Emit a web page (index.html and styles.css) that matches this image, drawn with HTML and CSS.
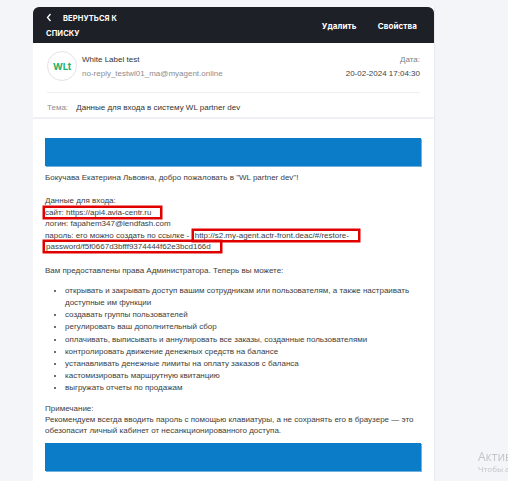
FILE: index.html
```html
<!DOCTYPE html>
<html lang="ru">
<head>
<meta charset="utf-8">
<link rel="stylesheet" href="styles.css">
</head>
<body>
<div class="panel">
  <div class="topbar">
    <a class="back">
      <svg class="chev" width="6" height="9" viewBox="0 0 6 9"><polyline points="4.5,1 1.5,4.5 4.5,8" fill="none" stroke="#fff" stroke-width="1.3"/></svg>ВЕРНУТЬСЯ К СПИСКУ
    </a>
    <div class="actions">
      <span>Удалить</span>
      <span>Свойства</span>
    </div>
  </div>
  <div class="sender-wrap">
    <div class="sender">
      <div class="avatar">WLt</div>
      <div class="from">
        <div class="name">White Label test</div>
        <div class="email">no-reply_testwl01_ma@myagent.online</div>
      </div>
      <div class="date">
        <div>Дата:</div>
        <div>20-02-2024 17:04:30</div>
      </div>
    </div>
  </div>
  <div class="subject">
    <span class="label">Тема:</span>
    <span class="subj-text">Данные для входа в систему WL partner dev</span>
  </div>
  <div class="mail">
    <div class="band"></div>
    <p class="greet">Бокучава Екатерина Львовна, добро пожаловать в "WL partner dev"!</p>
    <p class="creds">Данные для входа:<br>
      <span class="hl hl-site">сайт: https://api4.avia-centr.ru</span><br>
      логин: fapahem347@lendfash.com<br>
      пароль: его можно создать по ссылке -&nbsp;&nbsp;<span class="hl hl-link">http://s2.my-agent.actr-front.deac/#/restore-password/f5f0667d3bfff9374444f62e3bcd166d</span>
    </p>
    <p class="rights">Вам предоставлены права Администратора. Теперь вы можете:</p>
    <ul class="list">
      <li>открывать и закрывать доступ вашим сотрудникам или пользователям, а также настраивать доступные им функции</li>
      <li>создавать группы пользователей</li>
      <li>регулировать ваш дополнительный сбор</li>
      <li>оплачивать, выписывать и аннулировать все заказы, созданные пользователями</li>
      <li>контролировать движение денежных средств на балансе</li>
      <li>устанавливать денежные лимиты на оплату заказов с баланса</li>
      <li>кастомизировать маршрутную квитанцию</li>
      <li>выгружать отчеты по продажам</li>
    </ul>
    <p class="note">Примечание:<br>Рекомендуем всегда вводить пароль с помощью клавиатуры, а не сохранять его в браузере — это обезопасит личный кабинет от несанкционированного доступа.</p>
    <div class="band"></div>
  </div>
</div>
<div class="watermark">
  <div class="wm-big">Актив</div>
  <div class="wm-small">Чтобы а</div>
</div>
</body>
</html>
```

FILE: styles.css
```css
html, body {
  margin: 0;
  padding: 0;
}
body {
  background: #f4f5f8;
  height: 481px;
  overflow: hidden;
  font-family: "Liberation Sans", Arial, sans-serif;
}
.panel {
  margin: 7px 0 0 33px;
  width: 401px;
  min-height: 474px;
  background: #fff;
  border-right: 1px solid #e8e8ee;
}
.topbar {
  height: 36px;
  background: #1e2027;
  border-radius: 6px 6px 0 0;
  display: flex;
  align-items: center;
  justify-content: space-between;
  padding: 1px 17px 0 13px;
  box-sizing: border-box;
  font-family: Inter, "Noto Sans", sans-serif;
  font-weight: 700;
  color: #fff;
}
.back {
  width: 80px;
  font-size: 7.5px;
  line-height: 15px;
  letter-spacing: 0.1px;
}
.chev {
  vertical-align: -1px;
  margin-right: 11px;
}
.actions {
  display: flex;
  gap: 21px;
  font-size: 8px;
  letter-spacing: 0.1px;
}
.sender-wrap {
  padding: 0 14px;
}
.sender {
  display: flex;
  align-items: center;
  padding: 8px 0 11px;
  border-bottom: 1px solid #efeff3;
}
.avatar {
  width: 28px;
  height: 28px;
  border: 1px solid #e2e2ea;
  border-radius: 50%;
  display: flex;
  align-items: center;
  justify-content: center;
  font-family: Inter, "Noto Sans", sans-serif;
  font-weight: 700;
  font-size: 9.5px;
  color: #22b26b;
  letter-spacing: -0.2px;
}
.from {
  margin-left: 5px;
  flex: 1;
  font-size: 8px;
  line-height: 14px;
  padding-top: 2px;
}
.name {
  color: #333;
}
.email {
  color: #8c8c92;
}
.date {
  text-align: right;
  font-size: 8px;
  line-height: 14px;
  padding-top: 2px;
  color: #7f7f85;
}
.date div:last-child {
  color: #444;
}
.subject {
  padding: 9px 14px 3px;
  font-size: 8px;
  line-height: 12px;
  border-bottom: 2px solid #f0f0f4;
}
.label {
  color: #8c8c92;
  margin-right: 6px;
}
.subj-text {
  color: #333;
}
.mail {
  padding: 19px 13px 12px 12px;
  font-size: 8px;
  color: #3d3d3d;
  line-height: 11.4px;
}
.band {
  height: 28px;
  background: #0a7cc8;
  box-shadow: 1px 1px 0 #6fb2e0;
}
.mail p {
  margin: 0;
}
.greet {
  padding-top: 6px;
}
.creds {
  margin-top: 12px !important;
}
.rights {
  margin-top: 13px !important;
}
.list {
  margin: 8px 0 0;
  padding-left: 20px;
  line-height: 12.2px;
}
.note {
  margin-top: 8px !important;
  margin-bottom: 6px !important;
}
.hl {
  box-shadow: 0 0 0 2.5px #e10000;
  -webkit-box-decoration-break: clone;
  box-decoration-break: clone;
  padding: 0 9px 0 0;
}
.hl-link {
  padding-left: 1px;
}
.watermark {
  position: fixed;
  left: 478px;
  top: 449px;
  white-space: nowrap;
  color: #c4c4c8;
  font-family: "Open Sans", "Noto Sans", sans-serif;
}
.wm-big {
  font-size: 12px;
  line-height: 15px;
}
.wm-small {
  font-size: 8px;
  line-height: 10px;
}
```
